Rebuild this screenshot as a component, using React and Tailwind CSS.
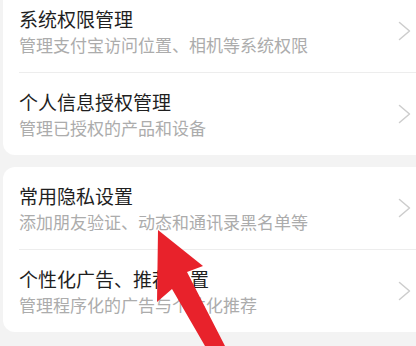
const groups = [
  [
    { title: '系统权限管理', desc: '管理支付宝访问位置、相机等系统权限' },
    { title: '个人信息授权管理', desc: '管理已授权的产品和设备' },
  ],
  [
    { title: '常用隐私设置', desc: '添加朋友验证、动态和通讯录黑名单等' },
    { title: '个性化广告、推荐设置', desc: '管理程序化的广告与个性化推荐' },
  ],
]

function Chevron() {
  return (
    <svg width="13" height="20" viewBox="0 0 13 20" fill="none" className="shrink-0">
      <path d="M1.5 1.5 L11.5 10 L1.5 18.5" stroke="#cdcdcd" strokeWidth="1.5" strokeLinecap="round" strokeLinejoin="round" />
    </svg>
  )
}

function Row({ title, desc, last }) {
  return (
    <div>
      <div className="flex items-center pl-4 pr-[5px]">
        <div className="flex-1 pt-4 pb-4">
          <p className="text-[19px] leading-[26px] text-[#1f1f1f]">{title}</p>
          <p className="mt-[2px] text-[17px] leading-[22px] text-[#acacac]">{desc}</p>
        </div>
        <Chevron />
      </div>
      {!last && <div className="ml-4 h-px bg-[#ededed]" />}
    </div>
  )
}

export default function App() {
  return (
    <div
      className="relative w-[416px] h-[346px] overflow-hidden bg-[#f3f3f3]"
      style={{ fontFamily: '"Noto Sans CJK SC", "Noto Sans", sans-serif' }}
    >
      <div className="-mt-[10px] flex flex-col gap-3">
        {groups.map((rows, i) => (
          <div key={i} className="ml-[3px] bg-white rounded-l-xl">
            {rows.map((r, j) => (
              <Row key={j} {...r} last={j === rows.length - 1} />
            ))}
          </div>
        ))}
      </div>

      {/* red arrow overlay */}
      <svg className="absolute inset-0 pointer-events-none" width="416" height="346" viewBox="0 0 416 346">
        <polygon
          points="158,230 203,266 187,272 225,346 205,346 172,289 157,302"
          fill="#e8222b"
        />
      </svg>
    </div>
  )
}
